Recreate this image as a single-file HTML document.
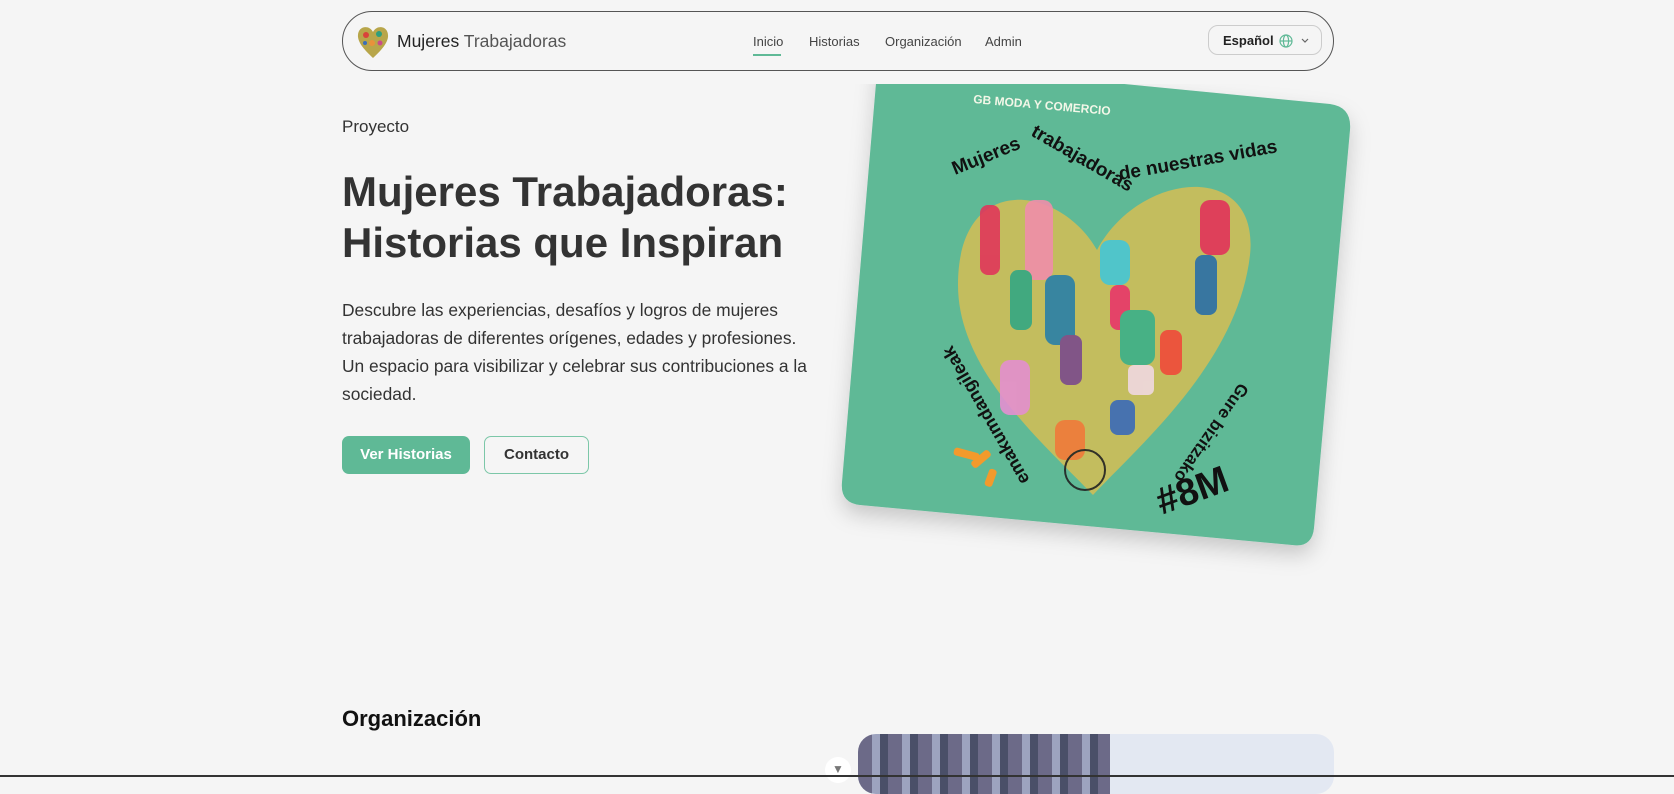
<!DOCTYPE html>
<html><head><meta charset="utf-8">
<style>
*{margin:0;padding:0;box-sizing:border-box}
html,body{width:1674px;height:777px;overflow:hidden;background:#f5f5f5;font-family:"Liberation Sans",Arial,sans-serif;color:#333}
.nav{position:absolute;left:342px;top:11px;width:992px;height:60px;border:1.5px solid #555;border-radius:30px;background:#f5f5f5}
.brand{position:absolute;left:54px;top:19px;font-size:17.5px;color:#222}
.brand span{color:#555}
.links{position:absolute;left:410px;top:22px;font-size:13px;color:#444}
.links a{position:absolute;white-space:nowrap;text-decoration:none;color:#444}
.lang{position:absolute;right:11px;top:13px;width:114px;height:30px;border:1px solid #ccc;border-radius:10px;font-size:13px;font-weight:bold;color:#222;padding:7px 0 0 14px}
h1{position:absolute;left:342px;top:166px;font-size:42px;line-height:51px;font-weight:bold;color:#333}
.k{position:absolute;left:342px;top:117px;font-size:17px;color:#333}
p.d{position:absolute;left:342px;top:296px;width:472px;font-size:17.4px;line-height:28px;color:#333}
.b1{position:absolute;left:342px;top:436px;width:128px;height:38px;background:#5fb996;border-radius:7px;color:#fff;font-weight:bold;font-size:15px;text-align:center;line-height:38px}
.b2{position:absolute;left:484px;top:436px;width:105px;height:38px;border:1.5px solid #7cc7a8;border-radius:7px;color:#333;font-weight:bold;font-size:15px;text-align:center;line-height:36px}
h2{position:absolute;left:342px;top:706px;font-size:22px;font-weight:bold;color:#111}
.photo{position:absolute;left:858px;top:734px;width:476px;height:60px;border-radius:18px;overflow:hidden;background:#e3e8f2}
.bot{position:absolute;left:0;top:775px;width:1674px;height:2px;background:#333}
</style></head><body>
<div class="nav">
  <svg style="position:absolute;left:12px;top:11px" width="36" height="36" viewBox="0 0 36 36"><path d="M18 9C14 1 2 3 3 14c1 8 9 15 15 21c6-6 14-13 15-21C34 3 22 1 18 9Z" fill="#b8a64a"/><circle cx="11" cy="12" r="3" fill="#d9433a"/><circle cx="24" cy="11" r="3" fill="#2f9e7d"/><circle cx="17" cy="20" r="3" fill="#e8923b"/><circle cx="10" cy="20" r="2" fill="#3b6fb8"/><circle cx="25" cy="20" r="2.5" fill="#c94b8a"/></svg>
  <div class="brand">Mujeres <span>Trabajadoras</span></div>
  <div class="links">
    <a style="left:0">Inicio</a>
    <div style="position:absolute;left:0;top:20px;width:28px;height:2px;background:#5fb996"></div>
    <a style="left:56px">Historias</a>
    <a style="left:132px">Organización</a>
    <a style="left:232px">Admin</a>
  </div>
  <div class="lang">Español <svg style="vertical-align:-3px;margin-left:2px" width="14" height="14" viewBox="0 0 14 14" fill="none" stroke="#5fb996" stroke-width="1.2"><circle cx="7" cy="7" r="6"/><ellipse cx="7" cy="7" rx="2.6" ry="6"/><path d="M1 7h12"/></svg> <svg style="margin-left:4px;vertical-align:1px" width="8" height="6" viewBox="0 0 8 6"><path d="M1 1l3 3 3-3" fill="none" stroke="#666" stroke-width="1.2"/></svg></div>
</div>

<div class="k">Proyecto</div>
<h1>Mujeres Trabajadoras:<br>Historias que Inspiran</h1>
<p class="d">Descubre las experiencias, desafíos y logros de mujeres trabajadoras de diferentes orígenes, edades y profesiones. Un espacio para visibilizar y celebrar sus contribuciones a la sociedad.</p>
<div class="b1">Ver Historias</div>
<div class="b2">Contacto</div>

<svg style="position:absolute;left:0;top:0" width="1674" height="777">
  <defs><filter id="sh" x="-10%" y="-10%" width="120%" height="130%"><feDropShadow dx="0" dy="10" stdDeviation="10" flood-color="#000" flood-opacity="0.18"/></filter>
  <clipPath id="cl"><rect x="0" y="84" width="1674" height="700"/></clipPath></defs>
  <g clip-path="url(#cl)">
  <path filter="url(#sh)" d="M878 60 L1330 104 Q1352 107 1350 130 L1314 528 Q1312 548 1292 545 L860 505 Q840 503 842 482 L878 60 Z" fill="#5fb996"/>
  </g>
  <path d="M1097 250 C1060 185 958 170 958 285 C958 370 1040 440 1093 495 C1145 440 1238 360 1250 255 C1260 160 1140 170 1097 250 Z" fill="#c3bd5e"/>
  <g opacity="0.9">
    <rect x="980" y="205" width="20" height="70" rx="8" fill="#e0365a"/>
    <rect x="1025" y="200" width="28" height="80" rx="10" fill="#f08eaa"/>
    <rect x="1045" y="275" width="30" height="70" rx="10" fill="#2a7fa8"/>
    <rect x="1010" y="270" width="22" height="60" rx="8" fill="#33a783"/>
    <rect x="1100" y="240" width="30" height="45" rx="10" fill="#44c6d6"/>
    <rect x="1110" y="285" width="20" height="45" rx="8" fill="#e8366a"/>
    <rect x="1200" y="200" width="30" height="55" rx="10" fill="#e1335a"/>
    <rect x="1195" y="255" width="22" height="60" rx="8" fill="#2a6fa8"/>
    <rect x="1120" y="310" width="35" height="55" rx="10" fill="#3ab08a"/>
    <rect x="1128" y="365" width="26" height="30" rx="6" fill="#f0d8e0"/>
    <rect x="1060" y="335" width="22" height="50" rx="8" fill="#7a4a8c"/>
    <rect x="1000" y="360" width="30" height="55" rx="10" fill="#e48fd0"/>
    <rect x="1055" y="420" width="30" height="40" rx="10" fill="#f07a3a"/>
    <circle cx="1085" cy="470" r="20" fill="none" stroke="#222" stroke-width="2"/>
    <rect x="1160" y="330" width="22" height="45" rx="8" fill="#f04a3a"/>
    <rect x="1110" y="400" width="25" height="35" rx="8" fill="#3a6ab8"/>
  </g>
  <g font-family="Liberation Sans,sans-serif" font-weight="bold">
    <text x="973" y="103" font-size="12" fill="#f3f7e8" transform="rotate(5 973 103)">GB MODA Y COMERCIO</text>
    <text x="955" y="175" font-size="19" fill="#111" transform="rotate(-22 955 175)">Mujeres</text>
    <text x="1030" y="135" font-size="19" fill="#111" transform="rotate(30 1030 135)">trabajadoras</text>
    <text x="1120" y="180" font-size="19" fill="#111" transform="rotate(-10 1120 180)">de nuestras vidas</text>
    <text x="1030" y="480" font-size="18" fill="#111" transform="rotate(-120 1030 480)">emakumdangileak</text>
    <text x="1240" y="382" font-size="17" fill="#111" transform="rotate(125 1240 382)">Gure bizitzako</text>
    <text x="1192" y="503" font-size="38" fill="#111" text-anchor="middle" transform="rotate(-20 1192 490)">#8M</text>
  </g>
  <g fill="#f39a2c"><rect x="955" y="447" width="26" height="8" rx="3" transform="rotate(15 955 447)"/><rect x="970" y="463" width="22" height="8" rx="3" transform="rotate(-40 970 463)"/><rect x="990" y="468" width="8" height="18" rx="3" transform="rotate(20 990 468)"/></g>
</svg>

<h2>Organización</h2>
<div class="photo"><div style="position:absolute;left:0;top:0;width:252px;height:60px;background:repeating-linear-gradient(90deg,#6c6a88 0 14px,#9da3bf 14px 22px,#4a4f68 22px 30px)"></div></div>
<div style="position:absolute;left:825px;top:757px;width:26px;height:26px;border-radius:13px;background:#fff;color:#777;font-size:12px;text-align:center;line-height:24px">▼</div>
<div class="bot"></div>
</body></html>
